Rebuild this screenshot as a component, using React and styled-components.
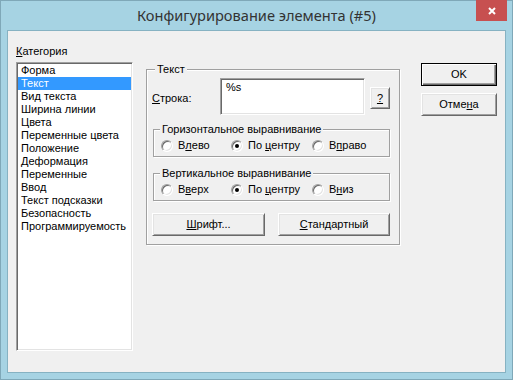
import React from "react";
import styled, { createGlobalStyle } from "styled-components";

const GlobalStyle = createGlobalStyle`
  html, body { margin: 0; padding: 0; background: #fff; }
  body {
    font-family: "Liberation Sans", Arial, sans-serif;
    font-size: 11px;
    color: #000;
  }
  * { box-sizing: border-box; }
`;

const Window = styled.div`
  width: 513px;
  height: 380px;
  background: #a6d3e3;
  border: 1px solid #7fa8b8;
  display: flex;
  flex-direction: column;
`;

const TitleBar = styled.div`
  height: 29px;
  display: grid;
  grid-template-columns: 1fr auto 1fr;
`;

const Title = styled.div`
  grid-column: 2;
  font-family: "Noto Sans", "Open Sans", sans-serif;
  font-size: 14.6px;
  color: #333;
  line-height: 29px;
  white-space: nowrap;
`;

const Close = styled.div`
  grid-column: 3;
  justify-self: end;
  align-self: start;
  width: 31px;
  height: 21px;
  margin-top: -1px;
  margin-right: 5px;
  background: #c75050;
  display: flex;
  align-items: center;
  justify-content: center;
`;

const Client = styled.div`
  flex: 1;
  margin: 0 6px 6px 6px;
  border: 1px solid #86b2c2;
  background: #f0f0f0;
  display: flex;
  align-items: flex-start;
  padding: 14px 0 0 8px;
`;

const LeftCol = styled.div`
  width: 117px;
  display: flex;
  flex-direction: column;
`;

const Label = styled.div`
  line-height: 13px;
  height: 13px;
  white-space: nowrap;
`;

const ListBox = styled.div`
  margin-top: 4px;
  height: 289px;
  background: #fff;
  border: 1px solid;
  border-color: #a0a0a0 #fff #fff #a0a0a0;
  box-shadow: inset 1px 1px 0 #696969, inset -1px -1px 0 #e3e3e3;
  padding: 1px;
`;

const Item = styled.div`
  line-height: 13px;
  height: 13px;
  padding-left: 3px;
  white-space: nowrap;
  background: ${(p) => (p.$sel ? "#3399ff" : "transparent")};
  color: ${(p) => (p.$sel ? "#fff" : "#000")};
`;

const MiddleCol = styled.div`
  margin-left: 13px;
  margin-top: 24px;
  width: 254px;
`;

const Group = styled.div`
  position: relative;
  border: 1px solid #a0a0a0;
  box-shadow: inset 1px 1px 0 #fff, 1px 1px 0 #fff;
  width: ${(p) => (p.$w ? p.$w + "px" : "auto")};
  height: ${(p) => (p.$h ? p.$h + "px" : "auto")};
  margin-top: ${(p) => p.$mt || 0}px;
  margin-left: ${(p) => p.$ml || 0}px;
`;

const Legend = styled.span`
  position: absolute;
  top: -7px;
  left: ${(p) => p.$lx}px;
  padding: 0 2px;
  line-height: 13px;
  background: #f0f0f0;
  white-space: nowrap;
`;

const TextGroupBody = styled.div`
  display: flex;
  flex-direction: column;
  padding: 8px 9px 8px 5px;
`;

const FieldRow = styled.div`
  display: flex;
  align-items: flex-start;
`;

const FieldLabel = styled.div`
  width: 68px;
  margin-top: 14px;
  line-height: 13px;
`;

const Edit = styled.div`
  width: 145px;
  height: 37px;
  background: #fff;
  border: 1px solid;
  border-color: #a0a0a0 #fff #fff #a0a0a0;
  box-shadow: inset 1px 1px 0 #696969, inset -1px -1px 0 #e3e3e3;
  padding: 2px 5px;
  line-height: 13px;
`;

const Button = styled.div`
  width: ${(p) => p.$w}px;
  height: ${(p) => p.$h || 23}px;
  margin-top: ${(p) => p.$mt || 0}px;
  margin-left: ${(p) => p.$ml || 0}px;
  background: #f0f0f0;
  border: 1px solid;
  border-color: ${(p) => (p.$def ? "#000" : "#fff #696969 #696969 #fff")};
  box-shadow: ${(p) =>
    p.$def
      ? "inset 1px 1px 0 #fff, inset -1px -1px 0 #696969, inset -2px -2px 0 #a0a0a0"
      : "inset 1px 1px 0 #e3e3e3, inset -1px -1px 0 #a0a0a0"};
  display: flex;
  align-items: center;
  justify-content: center;
  line-height: 13px;
  white-space: nowrap;
  flex-shrink: 0;
`;

const RadioRow = styled.div`
  display: flex;
  padding: 9px 0 0 7px;
`;

const Option = styled.div`
  display: flex;
  align-items: center;
  width: ${(p) => (p.$w ? p.$w + "px" : "auto")};
  line-height: 13px;
  height: 13px;
  white-space: nowrap;
`;

const RadioDot = styled.span`
  width: 12px;
  height: 12px;
  border-radius: 50%;
  background: #fff;
  border: 1px solid;
  border-color: #a0a0a0 #fff #fff #a0a0a0;
  box-shadow: inset 1px 1px 0 #696969, inset -1px -1px 0 #e3e3e3;
  margin-right: 5px;
  display: flex;
  align-items: center;
  justify-content: center;
  &::after {
    content: "";
    width: 4px;
    height: 4px;
    border-radius: 50%;
    background: ${(p) => (p.$on ? "#000" : "transparent")};
  }
`;

const ButtonRow = styled.div`
  display: flex;
  gap: 13px;
  margin-top: 12px;
`;

const RightCol = styled.div`
  margin-left: 21px;
  margin-top: 18px;
  width: 76px;
  display: flex;
  flex-direction: column;
  gap: 7px;
`;

const categories = [
  "Форма",
  "Текст",
  "Вид текста",
  "Ширина линии",
  "Цвета",
  "Переменные цвета",
  "Положение",
  "Деформация",
  "Переменные",
  "Ввод",
  "Текст подсказки",
  "Безопасность",
  "Программируемость",
];

const Radio = ({ w, on, children }) => (
  <Option $w={w}>
    <RadioDot $on={on} />
    <span>{children}</span>
  </Option>
);

export default function App() {
  return (
    <>
      <GlobalStyle />
      <Window>
        <TitleBar>
          <Title>Конфигурирование элемента (#5)</Title>
          <Close>
            <svg width="8" height="8" viewBox="0 0 8 8">
              <path d="M1 1 L7 7 M7 1 L1 7" stroke="#fff" strokeWidth="2" />
            </svg>
          </Close>
        </TitleBar>
        <Client>
          <LeftCol>
            <Label>
              <u>К</u>атегория
            </Label>
            <ListBox>
              {categories.map((c, i) => (
                <Item key={c} $sel={i === 1}>
                  {c}
                </Item>
              ))}
            </ListBox>
          </LeftCol>

          <MiddleCol>
            <Group>
              <Legend $lx={8}>Текст</Legend>
              <TextGroupBody>
                <FieldRow>
                  <FieldLabel>
                    <u>С</u>трока:
                  </FieldLabel>
                  <Edit>%s</Edit>
                  <Button $w={20} $h={22} $mt={9} $ml={5}>
                    <u>?</u>
                  </Button>
                </FieldRow>

                <Group $w={237} $h={28} $mt={14} $ml={1}>
                  <Legend $lx={6}>Горизонтальное выравнивание</Legend>
                  <RadioRow>
                    <Radio w={70}>
                      В<u>л</u>ево
                    </Radio>
                    <Radio w={81} on>
                      По <u>ц</u>ентру
                    </Radio>
                    <Radio>
                      В<u>п</u>раво
                    </Radio>
                  </RadioRow>
                </Group>

                <Group $w={237} $h={28} $mt={16} $ml={1}>
                  <Legend $lx={6}>Вертикальное выравнивание</Legend>
                  <RadioRow>
                    <Radio w={70}>
                      В<u>в</u>ерх
                    </Radio>
                    <Radio w={81} on>
                      По <u>ц</u>ентру
                    </Radio>
                    <Radio>
                      В<u>н</u>из
                    </Radio>
                  </RadioRow>
                </Group>

                <ButtonRow>
                  <Button $w={113}>
                    <span>
                      <u>Ш</u>рифт...
                    </span>
                  </Button>
                  <Button $w={112}>
                    <span>
                      <u>С</u>тандартный
                    </span>
                  </Button>
                </ButtonRow>
              </TextGroupBody>
            </Group>
          </MiddleCol>

          <RightCol>
            <Button $w={76} $def>
              OK
            </Button>
            <Button $w={76}>
              <span>
                Отме<u>н</u>а
              </span>
            </Button>
          </RightCol>
        </Client>
      </Window>
    </>
  );
}
